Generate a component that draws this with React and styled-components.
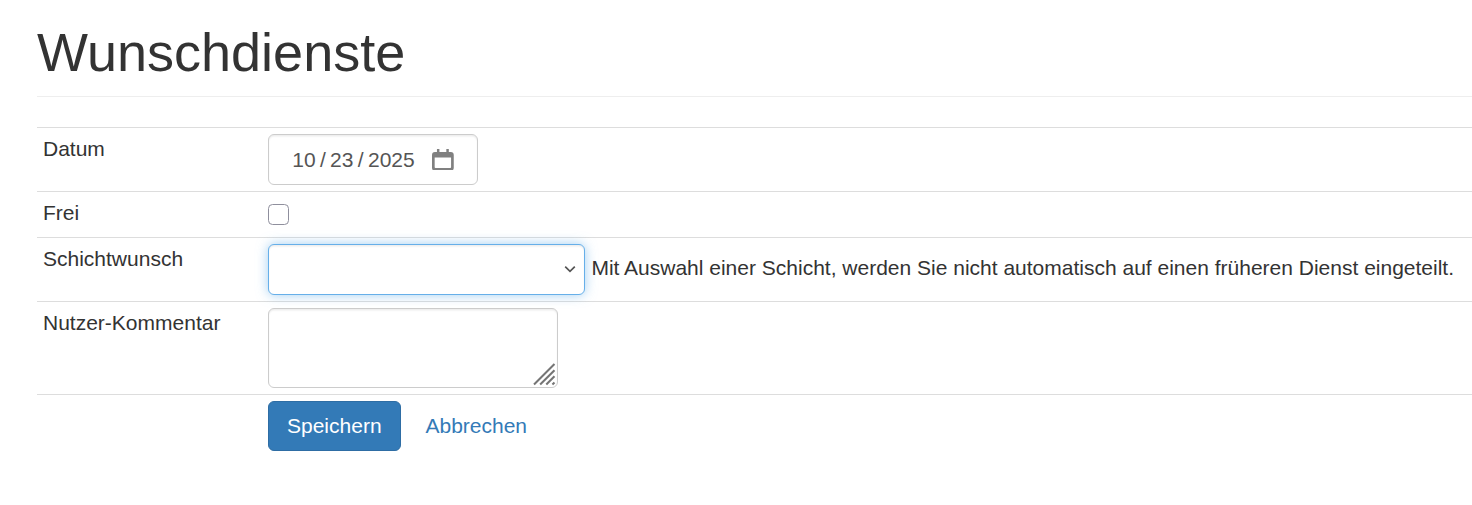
import React from 'react';
import styled, { createGlobalStyle } from 'styled-components';

const GlobalStyle = createGlobalStyle`
    html, body {
        margin: 0;
        background: #fff;
        overflow: hidden;
    }
    * {
        box-sizing: border-box;
    }
`

const Page = styled.div`
    zoom: 1.5;
    padding: 15.4px 0 0 24.67px;
    font-family: "Liberation Sans", Arial, sans-serif;
    font-size: 14px;
    line-height: 1.42857143;
    color: #333;
`

const PageHeader = styled.div`
    padding-bottom: 9px;
    margin-bottom: 20px;
    border-bottom: 1px solid #eee;

    h1 {
        margin: 0;
        font-size: 36px;
        font-weight: 500;
        line-height: 1.1;
    }
`

const FormTable = styled.table`
    width: 100%;
    table-layout: fixed;
    border-collapse: collapse;
    border-spacing: 0;

    td {
        padding: 4px;
        vertical-align: top;
        border-top: 1px solid #ddd;
    }
    td:first-child {
        width: 150px;
    }
`

const controlCss = `
    height: 34px;
    padding: 6px 12px;
    font-family: inherit;
    font-size: 14px;
    line-height: 1.42857143;
    color: #555;
    background-color: #fff;
    border: 1px solid #ccc;
    border-radius: 4px;
    box-shadow: inset 0 1px 1px rgba(0, 0, 0, .075);
    outline: none;
    display: inline-block;
    vertical-align: middle;
`

const DateField = styled.div`
    ${controlCss}
    display: flex;
    align-items: center;
    justify-content: space-between;
    width: 140px;
    padding: 6px 15.5px;
    word-spacing: -1px;

    span {
        padding-top: 0.7px;
    }
    svg {
        flex: none;
        width: 14.5px;
        height: 14.5px;
    }
`

const Check = styled.input`
    appearance: none;
    display: block;
    width: 14px;
    height: 14px;
    margin: 4px 0 3.7px;
    background: #fff;
    border: 1px solid #8f8f9d;
    border-radius: 3px;
`

const Select = styled.select`
    ${controlCss}
    appearance: none;
    width: 211px;
    margin-right: 0.7px;
    border-color: #66afe9;
    box-shadow: inset 0 1px 1px rgba(0, 0, 0, .075), 0 0 8px rgba(102, 175, 233, .6);
    background-image: url("data:image/svg+xml,%3Csvg xmlns='http://www.w3.org/2000/svg' viewBox='0 0 12 8'%3E%3Cpath d='M1.2 1.5 6 6.3l4.8-4.8' fill='none' stroke='%23555' stroke-width='1.7'/%3E%3C/svg%3E");
    background-repeat: no-repeat;
    background-size: 8px 5.5px;
    background-position: right 4.7px center;
`

const CommentBox = styled.div`
    position: relative;
    width: 193px;
    height: 53.5px;
`

const TextArea = styled.textarea`
    ${controlCss}
    display: block;
    width: 100%;
    height: 100%;
    resize: none;
`

const Grip = styled.svg`
    position: absolute;
    right: 1.3px;
    bottom: 1.3px;
    width: 15px;
    height: 15px;
    pointer-events: none;
`

const SaveButton = styled.button`
    display: inline-block;
    height: 33.5px;
    padding: 5px 12px;
    font-family: inherit;
    font-size: 14px;
    line-height: 1.42857143;
    color: #fff;
    background: #337ab7;
    border: 1px solid #2e6da4;
    border-radius: 4px;
    vertical-align: middle;
`

const CancelLink = styled.a`
    display: inline-block;
    margin-left: 0.7px;
    padding: 6px 12px;
    color: #337ab7;
    text-decoration: none;
    vertical-align: middle;
`

const CalendarIcon = () => (
    <svg viewBox="0 0 22 22">
        <path
            fill="#808080"
            fillRule="evenodd"
            d="M5 0h2.5v3h7V0H17v3h2a3 3 0 0 1 3 3v13a3 3 0 0 1-3 3H3a3 3 0 0 1-3-3V6a3 3 0 0 1 3-3h2V0ZM2.7 8.5v10c0 .5.3.8.8.8h15c.5 0 .8-.3.8-.8v-10H2.7Z"
        />
    </svg>
);

const App = () => {
    return (
        <Page>
            <GlobalStyle />
            <PageHeader>
                <h1>Wunschdienste</h1>
            </PageHeader>
            <form onSubmit={(e) => e.preventDefault()}>
                <FormTable>
                    <tbody>
                        <tr>
                            <td>Datum</td>
                            <td>
                                <DateField>
                                    <span>10 / 23 / 2025</span>
                                    <CalendarIcon />
                                </DateField>
                            </td>
                        </tr>
                        <tr>
                            <td>Frei</td>
                            <td><Check type="checkbox" /></td>
                        </tr>
                        <tr>
                            <td>Schichtwunsch</td>
                            <td>
                                <Select defaultValue="">
                                    <option value=""></option>
                                </Select>
                                {' '}Mit Auswahl einer Schicht, werden Sie nicht automatisch auf einen früheren Dienst eingeteilt.
                            </td>
                        </tr>
                        <tr>
                            <td>Nutzer-Kommentar</td>
                            <td>
                                <CommentBox>
                                    <TextArea />
                                    <Grip viewBox="0 0 22 22">
                                        <path
                                            stroke="#757575"
                                            strokeWidth="2"
                                            fill="none"
                                            d="M1 21 21 1M7 21 21 7M13 21l8-8M19 21l2-2"
                                        />
                                    </Grip>
                                </CommentBox>
                            </td>
                        </tr>
                        <tr>
                            <td></td>
                            <td>
                                <SaveButton type="submit">Speichern</SaveButton>
                                {' '}
                                <CancelLink href="#">Abbrechen</CancelLink>
                            </td>
                        </tr>
                    </tbody>
                </FormTable>
            </form>
        </Page>
    );
}

export default App;
